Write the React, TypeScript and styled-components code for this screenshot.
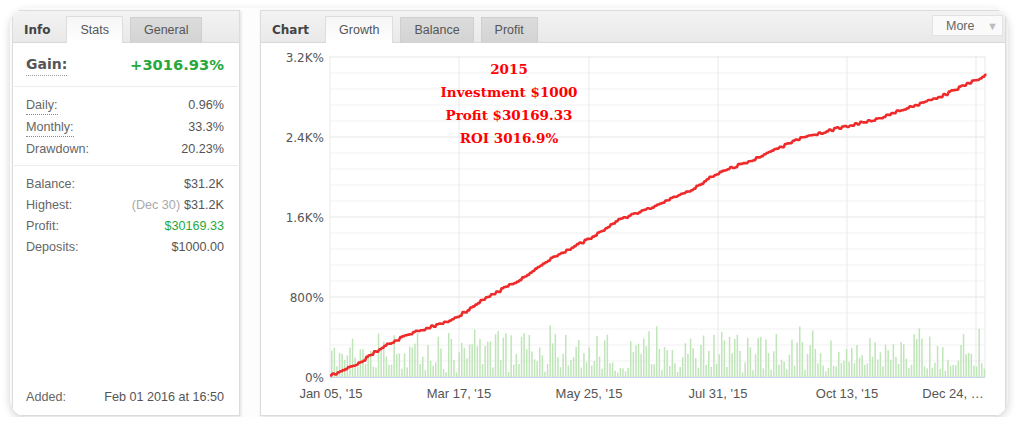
import React from "react";
import styled, { createGlobalStyle } from "styled-components";

const GlobalStyle = createGlobalStyle`
  body {
    margin: 0;
    background: #ffffff;
    font-family: "Liberation Sans", Arial, sans-serif;
  }
`;

const Frame = styled.div`
  margin: 8px 0 0 10px;
  width: 998px;
  height: 409px;
  box-sizing: border-box;
  padding: 2px 2px 0 2px;
  display: flex;
  gap: 20px;
  border-radius: 18px;
  overflow: hidden;
  background: #fdfdfd;
  box-shadow: 0 3px 8px rgba(0, 0, 0, 0.18);
`;

const Panel = styled.div<{ $w: number }>`
  width: ${(p) => p.$w}px;
  height: 406px;
  box-sizing: border-box;
  border: 1px solid #dcdcdc;
  background: #fff;
  display: flex;
  flex-direction: column;
  box-shadow: 1px 1px 3px rgba(0, 0, 0, 0.12);
`;

const Header = styled.div`
  flex-shrink: 0;
  height: 32px;
  box-sizing: border-box;
  display: flex;
  align-items: flex-end;
  padding-left: 11px;
  background: linear-gradient(#f3f3f3, #e9e9e9);
  border-bottom: 1px solid #d9d9d9;
`;

const HeaderTitle = styled.div`
  height: 25px;
  display: flex;
  align-items: center;
  font-family: "DejaVu Sans", Verdana, sans-serif;
  font-weight: bold;
  font-size: 12px;
  color: #444;
  margin-right: 16px;
`;

const Tab = styled.div<{ $active?: boolean }>`
  box-sizing: border-box;
  padding: 0 13px 1px;
  margin-right: 7px;
  display: flex;
  align-items: center;
  font-size: 12.5px;
  color: #555;
  border: 1px solid ${(p) => (p.$active ? "#dddddd" : "#cfcfcf")};
  border-bottom: none;
  margin-bottom: -1px;
  background: ${(p) =>
    p.$active
      ? "linear-gradient(#f6f6f6, #ffffff)"
      : "linear-gradient(#dcdcdc, #d3d3d3)"};
  height: ${(p) => (p.$active ? "27px" : "26px")};
`;

const MoreButton = styled.div`
  align-self: flex-start;
  margin: 4px 2px 0 auto;
  height: 21px;
  width: 71px;
  box-sizing: border-box;
  border: 1px solid #e2e2e2;
  background: #fafafa;
  display: flex;
  align-items: center;
  justify-content: space-between;
  padding: 0 4px 0 13px;
  font-size: 12.5px;
  color: #666;
`;

const Caret = styled.span`
  font-size: 11px;
  color: #bdbdbd;
`;

const Body = styled.div`
  flex: 1;
  min-height: 0;
  display: flex;
  flex-direction: column;
  padding: 0 1px;
`;

const Section = styled.div<{ $pt: number; $pb: number; $last?: boolean }>`
  padding: ${(p) => p.$pt}px 14px ${(p) => p.$pb}px 12px;
  border-bottom: ${(p) => (p.$last ? "none" : "1px solid #ececec")};
`;

const Row = styled.div<{ $h: number }>`
  height: ${(p) => p.$h}px;
  display: flex;
  align-items: center;
  justify-content: space-between;
  font-size: 12.6px;
  color: #666;
`;

const Label = styled.span<{ $dotted?: boolean }>`
  line-height: 14px;
  padding-top: ${(p) => (p.$dotted ? "2px" : "0")};
  padding-bottom: ${(p) => (p.$dotted ? "2px" : "0")};
  border-bottom: ${(p) => (p.$dotted ? "1px dotted #888" : "none")};
`;

const Value = styled.span<{ $green?: boolean }>`
  color: ${(p) => (p.$green ? "#27a83d" : "#555")};
`;

const Muted = styled.span`
  color: #aaa;
  margin-right: 4px;
`;

const GainLabel = styled.span`
  font-family: "DejaVu Sans", Verdana, sans-serif;
  font-weight: bold;
  font-size: 14px;
  color: #555;
  padding: 4px 0 3px;
  border-bottom: 1px dotted #999;
`;

const GainValue = styled.span`
  font-family: "DejaVu Sans", Verdana, sans-serif;
  font-weight: bold;
  font-size: 14.7px;
  color: #27a83d;
`;

const Footer = styled.div`
  margin-top: auto;
  padding: 0 14px 8px 12px;
`;

const ChartBody = styled.div`
  flex: 1;
  min-height: 0;
  position: relative;

  svg {
    display: block;
  }
`;

const Note = styled.div`
  position: absolute;
  left: 248px;
  top: 15px;
  transform: translateX(-50%);
  text-align: center;
  font-family: "DejaVu Serif", "Liberation Serif", serif;
  font-weight: bold;
  font-size: 13.5px;
  line-height: 23px;
  color: #ff0000;
  white-space: nowrap;
`;

function rng(seed: number) {
  return () => {
    seed |= 0;
    seed = (seed + 0x6d2b79f5) | 0;
    let t = Math.imul(seed ^ (seed >>> 15), 1 | seed);
    t = (t + Math.imul(t ^ (t >>> 7), 61 | t)) ^ t;
    return ((t ^ (t >>> 14)) >>> 0) / 4294967296;
  };
}

const rand = rng(11);

const keys: [number, number][] = [
  [330, 375], [360, 361], [387, 343], [417, 330], [440, 323], [460, 314],
  [480, 300], [517, 280], [550, 258], [590, 237], [620, 218], [660, 203],
  [690, 189], [718, 172], [760, 156], [800, 137], [847, 125], [880, 117],
  [900, 109], [940, 96], [986, 74],
];

function lineY(x: number) {
  for (let i = 1; i < keys.length; i++) {
    const [x0, y0] = keys[i - 1];
    const [x1, y1] = keys[i];
    if (x <= x1) return y0 + ((x - x0) / (x1 - x0)) * (y1 - y0);
  }
  return keys[keys.length - 1][1];
}

const bars: { x: number; h: number }[] = [];
for (let i = 0; i < 252; i++) {
  const r = rand();
  let h = 8 + r * 36 + (rand() < 0.2 ? rand() * 12 : 0);
  if (rand() < 0.12) h = 4 + rand() * 10;
  bars.push({ x: 331 + i * 2.6, h });
}

// stepped, slightly noisy growth curve
const linePts: string[] = [];
for (let x = 330; x <= 986; x += 2.6) {
  const y = lineY(x) + (rand() - 0.5) * 2.4;
  linePts.push(`${x.toFixed(1)},${y.toFixed(1)}`);
  linePts.push(`${(x + 1.3).toFixed(1)},${y.toFixed(1)}`);
}
const linePath = "M" + linePts.join(" L");

const yTicks = [
  { y: 56, t: "3.2K%" },
  { y: 136, t: "2.4K%" },
  { y: 216, t: "1.6K%" },
  { y: 296, t: "800%" },
  { y: 376, t: "0%" },
];

const xTicks = [
  { x: 331, t: "Jan 05, '15" },
  { x: 459, t: "Mar 17, '15" },
  { x: 589, t: "May 25, '15" },
  { x: 718, t: "Jul 31, '15" },
  { x: 847, t: "Oct 13, '15" },
  { x: 953, t: "Dec 24, …" },
];

function Chart() {
  const minor: number[] = [];
  for (let y = 56; y <= 376; y += 16) minor.push(y);
  return (
    <svg width={744} height={372} viewBox="261 42 744 372">
      {minor.map((y) => (
        <line key={y} x1={330} x2={985} y1={y} y2={y} stroke={(y - 56) % 80 === 0 ? "#e6e6e6" : "#f1f1f1"} />
      ))}
      {[330, 459, 589, 718, 847, 976, 985].map((x) => (
        <line key={x} x1={x} x2={x} y1={55} y2={376} stroke="#e9e9e9" />
      ))}
      {bars.map((b, i) => (
        <rect key={i} x={b.x} y={376 - b.h} width={1.5} height={b.h} fill="#bfe5b8" />
      ))}
      <line x1={330} x2={985} y1={376.5} y2={376.5} stroke="#c9d5ec" />
      <path d={linePath} fill="none" stroke="#ef2a2a" strokeWidth={2.6} strokeLinejoin="round" />
      {yTicks.map((t) => (
        <text key={t.t} x={324} y={t.y + 5} textAnchor="end" fontFamily="DejaVu Sans, sans-serif" fontSize={12} fill="#555">
          {t.t}
        </text>
      ))}
      {xTicks.map((t) => (
        <text key={t.t} x={t.x} y={397} textAnchor="middle" fontFamily="Liberation Sans, Arial, sans-serif" fontSize={13} fill="#555">
          {t.t}
        </text>
      ))}
    </svg>
  );
}

export default function App() {
  return (
    <>
      <GlobalStyle />
      <Frame>
        <Panel $w={228}>
          <Header>
            <HeaderTitle>Info</HeaderTitle>
            <Tab $active>Stats</Tab>
            <Tab>General</Tab>
          </Header>
          <Body>
            <Section $pt={10} $pb={11}>
              <Row $h={22}>
                <GainLabel>Gain:</GainLabel>
                <GainValue>+3016.93%</GainValue>
              </Row>
            </Section>
            <Section $pt={7} $pb={5}>
              <Row $h={22}>
                <Label $dotted>Daily:</Label>
                <Value>0.96%</Value>
              </Row>
              <Row $h={22}>
                <Label $dotted>Monthly:</Label>
                <Value>33.3%</Value>
              </Row>
              <Row $h={22}>
                <Label>Drawdown:</Label>
                <Value>20.23%</Value>
              </Row>
            </Section>
            <Section $pt={7} $pb={0} $last>
              <Row $h={21}>
                <Label>Balance:</Label>
                <Value>$31.2K</Value>
              </Row>
              <Row $h={21}>
                <Label>Highest:</Label>
                <Value>
                  <Muted>(Dec 30)</Muted>$31.2K
                </Value>
              </Row>
              <Row $h={21}>
                <Label>Profit:</Label>
                <Value $green>$30169.33</Value>
              </Row>
              <Row $h={21}>
                <Label>Deposits:</Label>
                <Value>$1000.00</Value>
              </Row>
            </Section>
            <Footer>
              <Row $h={20}>
                <Label>Added:</Label>
                <Value>Feb 01 2016 at 16:50</Value>
              </Row>
            </Footer>
          </Body>
        </Panel>
        <Panel $w={746}>
          <Header>
            <HeaderTitle>Chart</HeaderTitle>
            <Tab $active>Growth</Tab>
            <Tab>Balance</Tab>
            <Tab>Profit</Tab>
            <MoreButton>
              More <Caret>▼</Caret>
            </MoreButton>
          </Header>
          <ChartBody>
            <Chart />
            <Note>
              2015
              <br />
              Investment $1000
              <br />
              Profit $30169.33
              <br />
              ROI 3016.9%
            </Note>
          </ChartBody>
        </Panel>
      </Frame>
    </>
  );
}
